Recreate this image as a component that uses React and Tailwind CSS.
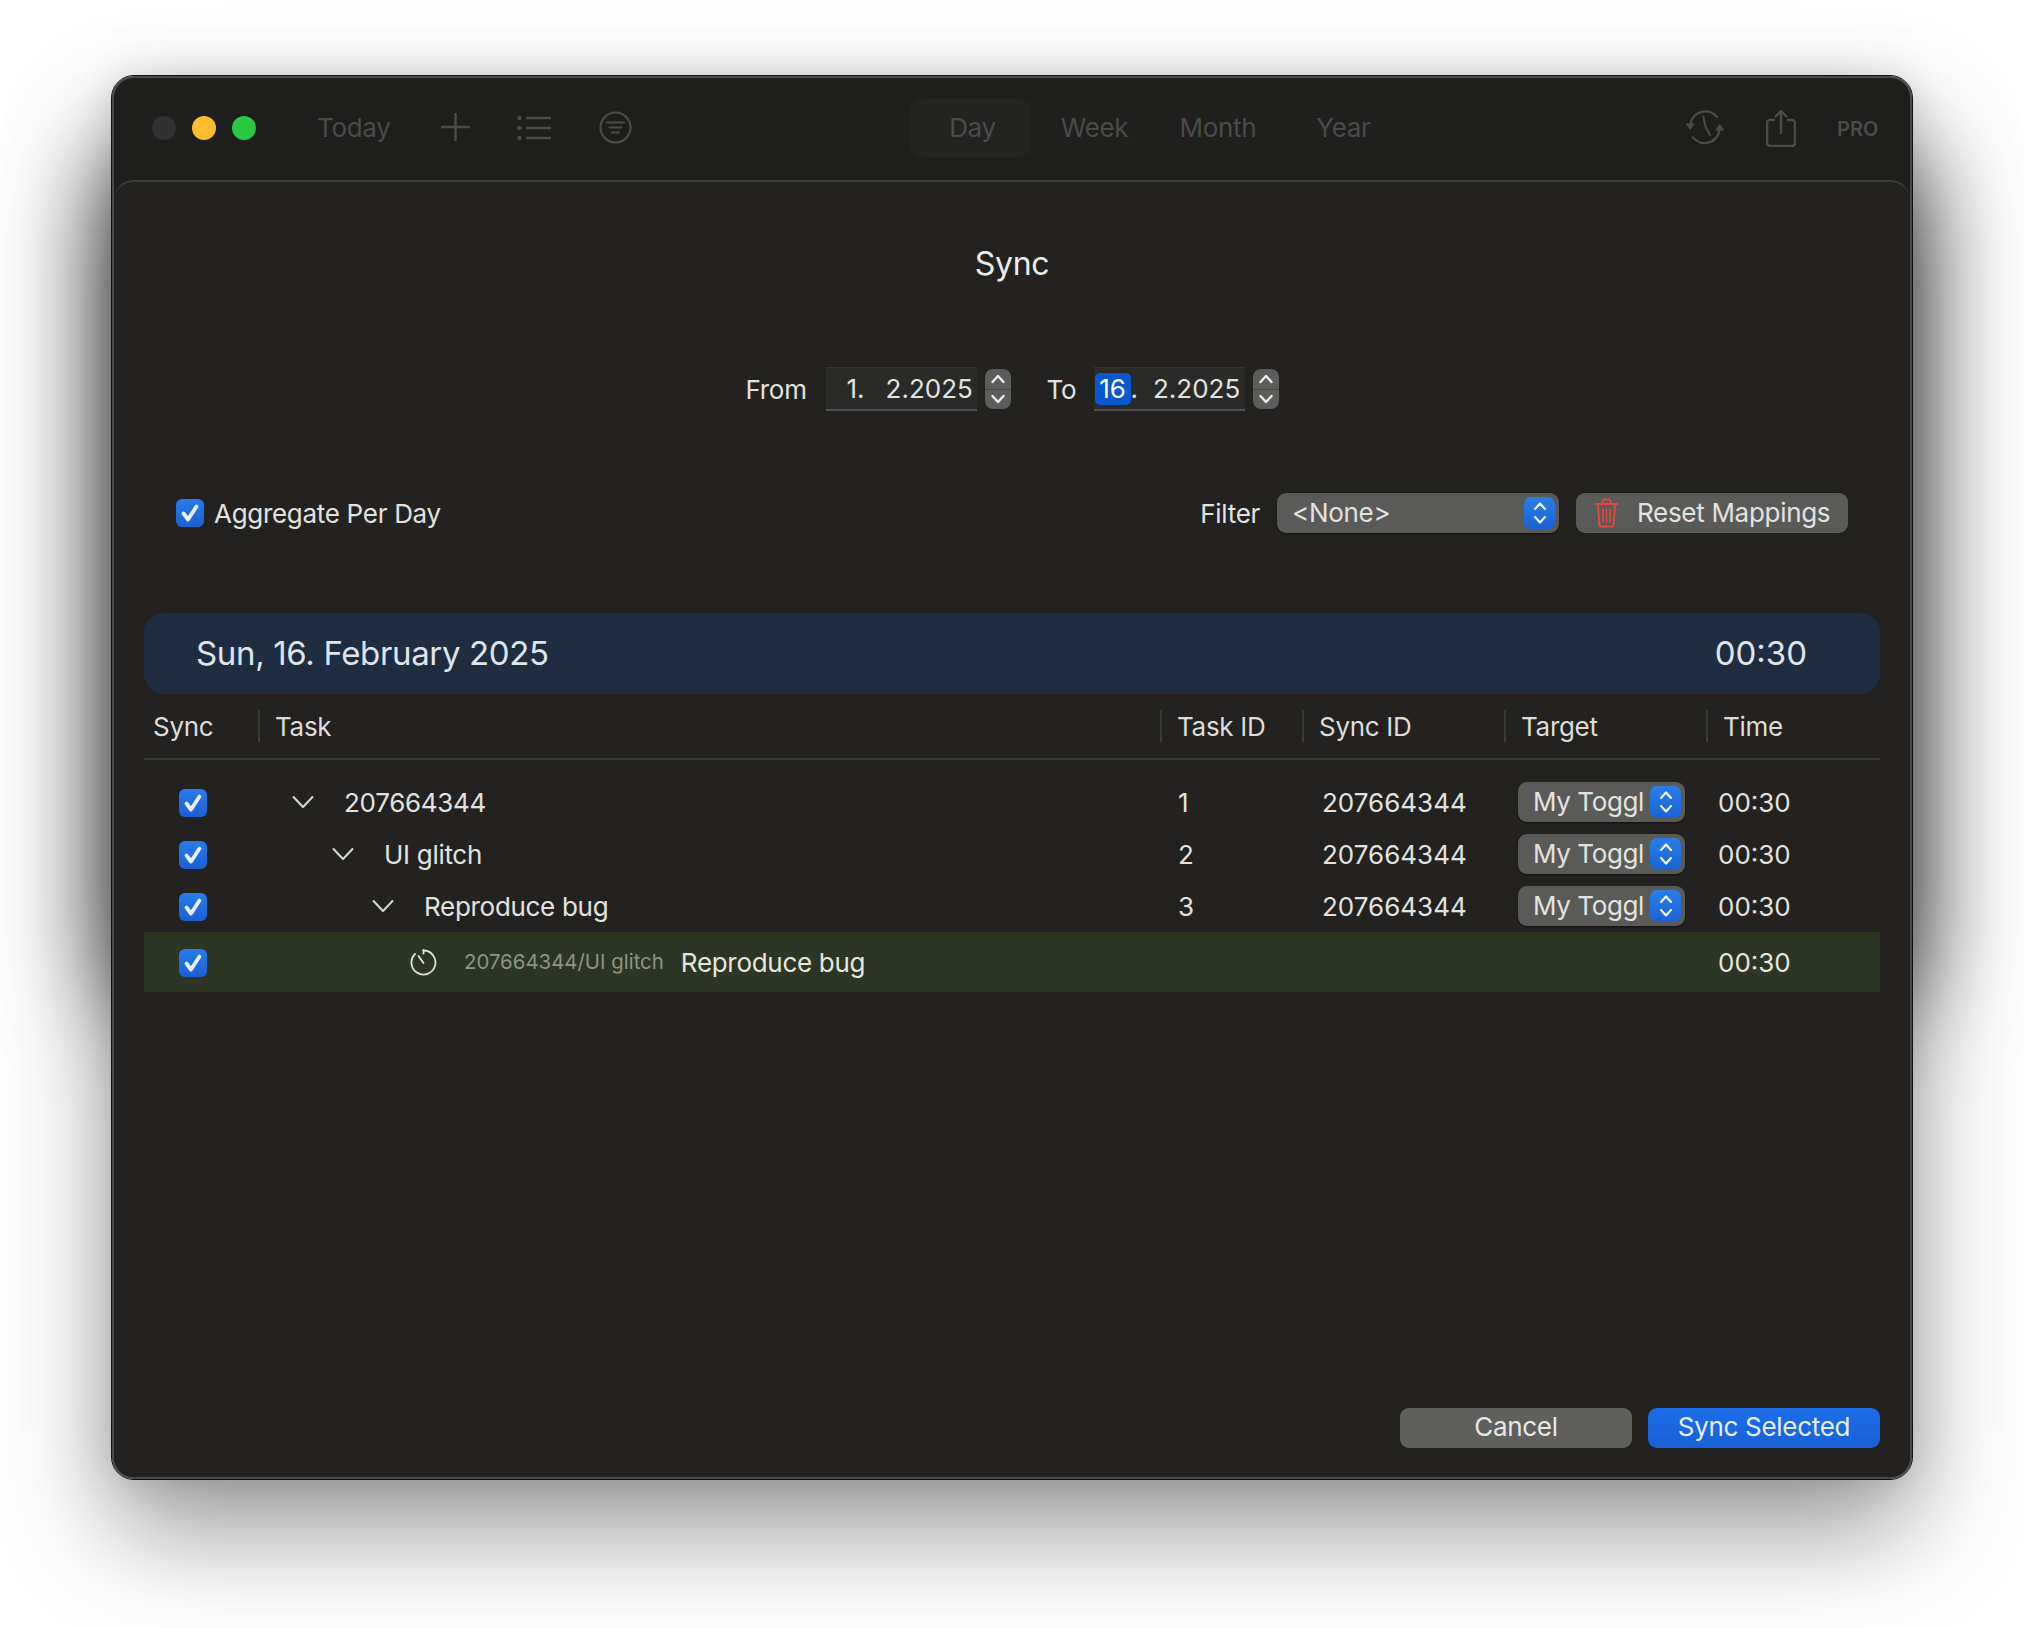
const sans = "font-['Inter','Liberation_Sans',sans-serif]";
const cols = "grid grid-cols-[114px_902px_142px_202px_202px_174px]";

function Checkbox() {
  return (
    <div className="w-[28px] h-[28px] rounded-[6px] bg-gradient-to-b from-[#2a7cec] to-[#1b5fd2] flex items-center justify-center shrink-0">
      <svg width="22" height="22" viewBox="0 0 22 22" fill="none">
        <path d="M4.500 11.500 9 17.500 17.500 4.500" stroke="#e8f0ff" strokeWidth="3.800" strokeLinecap="round" strokeLinejoin="round" />
      </svg>
    </div>
  );
}

function UpDown() {
  return (
    <svg width="14" height="30" viewBox="0 0 14 30" fill="none">
      <path d="M2 11 7 5.500 12 11M2 19 7 24.500 12 19" stroke="#f2f6ff" strokeWidth="2.200" strokeLinecap="round" strokeLinejoin="round" />
    </svg>
  );
}

function Chevron() {
  return (
    <svg width="22" height="14" viewBox="0 0 22 14" fill="none">
      <path d="M1.500 2 11 12 20.500 2" stroke="#d8d8d6" strokeWidth="2" strokeLinecap="round" strokeLinejoin="round" />
    </svg>
  );
}

function Stepper() {
  return (
    <div className="w-[26px] h-[40px] rounded-[8px] bg-[#5c5c5b] flex flex-col items-center justify-between py-[3px] relative">
      <svg width="16" height="14" viewBox="0 0 16 14" fill="none">
        <path d="M2.500 10 8 4l5.500 6" stroke="#ececec" strokeWidth="2.400" strokeLinecap="round" strokeLinejoin="round" />
      </svg>
      <div className="absolute left-0 right-0 top-[20px] h-px bg-[#474747]" />
      <svg width="16" height="14" viewBox="0 0 16 14" fill="none">
        <path d="M2.500 4 8 10l5.500-6" stroke="#ececec" strokeWidth="2.400" strokeLinecap="round" strokeLinejoin="round" />
      </svg>
    </div>
  );
}

function Field({ children }) {
  return (
    <div className="w-[151px] h-[44px] bg-[#2a2a29] border-t border-t-[#353535] border-b-2 border-b-[#505050] flex items-center text-[26px] text-[#e2e2e0] leading-none tracking-normal">
      {children}
    </div>
  );
}

function Popup({ label }) {
  return (
    <div className="w-[167px] h-[40px] rounded-[9px] bg-[#5a5a59] shadow-[0_1px_2px_rgba(0,0,0,0.5)] flex items-center justify-between pl-[15px] pr-[4px] text-[26px] text-[#e2e2e0]">
      <span className="whitespace-nowrap tracking-[-0.4px] pb-[2px]">{label}</span>
      <div className="w-[31px] h-[32px] rounded-[7px] bg-gradient-to-b from-[#2a7fe8] to-[#1a62d6] flex items-center justify-center">
        <UpDown />
      </div>
    </div>
  );
}

function HeadCell({ label, first }) {
  if (first) {
    return <div className="pl-[9px] text-[#dcdcda]">{label}</div>;
  }
  return (
    <div className="h-[32px] border-l-2 border-l-[#3a3a39] pl-[15px] flex items-center text-[#dcdcda]">{label}</div>
  );
}

function TreeRow({ depth, name, id }) {
  return (
    <div className={`${cols} h-[52px] items-center text-[26px] text-[#e2e2e0]`}>
      <div className="pl-[35px] pt-[2px]"><Checkbox /></div>
      <div className="flex items-center" style={{ paddingLeft: 34 + depth * 40 }}>
        <div className="w-[52px]"><Chevron /></div>
        <span>{name}</span>
      </div>
      <div className="pl-[18px] tracking-normal">{id}</div>
      <div className="pl-[20px] tracking-normal">207664344</div>
      <div className="pl-[14px]"><Popup label="My Toggl" /></div>
      <div className="pl-[12px] tracking-normal">00:30</div>
    </div>
  );
}

export default function App() {
  const rows = [
    { name: "207664344", id: 1 },
    { name: "UI glitch", id: 2 },
    { name: "Reproduce bug", id: 3 },
  ];
  return (
    <div className={`w-[2024px] h-[1628px] bg-white pt-[76px] pl-[112px] overflow-hidden ${sans}`}>
      <div className="relative w-[1800px] h-[1403px]">
        {/* heavier shadow behind the upper part of the window */}
        <div className="absolute left-0 right-0 top-[100px] h-[820px] bg-[#222] shadow-[0_0_100px_rgba(0,0,0,0.75)]" />

        <div className="relative w-[1800px] h-[1403px] rounded-[22px] bg-[#1e1e1d] border-2 border-[#4a4a4a] outline outline-1 outline-[#111] flex flex-col shadow-[0_50px_110px_rgba(0,0,0,0.42),0_0_40px_rgba(0,0,0,0.12)]">
          {/* toolbar, dimmed behind the sheet */}
          <div className="h-[102px] shrink-0 flex items-center text-[#4b4b4a] text-[26px] tracking-[-0.3px]">
            <div className="flex items-center gap-[16px] pl-[38px] -mt-[3px]">
              <div className="w-[24px] h-[24px] rounded-full bg-[#323232]" />
              <div className="w-[24px] h-[24px] rounded-full bg-[#febc2e]" />
              <div className="w-[24px] h-[24px] rounded-full bg-[#28c840]" />
            </div>
            <span className="ml-[61px] w-[72px] -mt-[3px]">Today</span>
            <svg className="ml-[52px] -mt-[5px]" width="29" height="28" viewBox="0 0 29 28" fill="none">
              <path d="M14.500 1v26M1 14h27" stroke="#4b4b4a" strokeWidth="2.400" strokeLinecap="round" />
            </svg>
            <svg className="ml-[47px] -mt-[3px]" width="35" height="26" viewBox="0 0 35 26" fill="none">
              <circle cx="2.500" cy="3" r="2.200" fill="#4b4b4a" />
              <circle cx="2.500" cy="13" r="2.200" fill="#4b4b4a" />
              <circle cx="2.500" cy="23" r="2.200" fill="#4b4b4a" />
              <path d="M9 3h25M9 13h25M9 23h25" stroke="#4b4b4a" strokeWidth="2.600" />
            </svg>
            <svg className="ml-[47px] -mt-[3px]" width="33" height="33" viewBox="0 0 33 33" fill="none">
              <circle cx="16.500" cy="16.500" r="15" stroke="#4b4b4a" strokeWidth="2.200" />
              <path d="M8 11.500h17M10.500 16.500h12M13 21.500h7" stroke="#4b4b4a" strokeWidth="2.200" strokeLinecap="round" />
            </svg>

            <div className="ml-[278px] -mt-[3px] w-[492px] h-[58px] rounded-[12px] bg-[#1f1f1e] flex items-center">
              <div className="w-[120px] h-[58px] rounded-[12px] bg-[#232322] flex items-center justify-center pl-[5px]">Day</div>
              <div className="w-[122px] text-center pl-[7px]">Week</div>
              <div className="w-[126px] text-center pl-[6px]">Month</div>
              <div className="w-[124px] text-center pl-[7px]">Year</div>
            </div>

            <svg className="ml-[283px] -mt-[4px]" width="40" height="34" viewBox="0 0 40 34" fill="none">
              <path d="M5.500 14a15 15 0 0 1 26.500-7M34.500 20a15 15 0 0 1-26.500 7.500" stroke="#4b4b4a" strokeWidth="2.400" strokeLinecap="round" />
              <path d="M0.500 13.500h9.500l-4.750 6.500zM30 20.500h9.500l-4.750-6.500z" fill="#4b4b4a" />
              <path d="M18.300 6.700 20.700 17.300 25 25" stroke="#4b4b4a" strokeWidth="2" strokeLinecap="round" strokeLinejoin="round" />
            </svg>
            <svg className="ml-[41px] -mt-[3px]" width="30" height="38" viewBox="0 0 30 38" fill="none">
              <path d="M9 11H4a3 3 0 0 0-3 3v20a3 3 0 0 0 3 3h22a3 3 0 0 0 3-3V14a3 3 0 0 0-3-3h-5" stroke="#4b4b4a" strokeWidth="2.600" />
              <path d="M15 25V3M9 8l6-6L21 8" stroke="#4b4b4a" strokeWidth="2.400" strokeLinejoin="round" />
            </svg>
            <span className="ml-[41px] text-[20px] font-semibold tracking-normal -mt-[1px]">PRO</span>
          </div>

          {/* sheet */}
          <div className="flex-1 rounded-[20px] bg-[#232220] border-t-2 border-t-[#3e3d3c] flex flex-col px-[30px] pb-[29px] text-[26px] text-[#e2e2e0] tracking-[-0.3px]">
            <div className="pt-[62px] h-[101px] text-center text-[32px] leading-[40px] text-[#ececea]">Sync</div>

            <div className="mt-[84px] h-[44px] flex items-center justify-center">
              <span className="w-[62px]">From</span>
              <div className="ml-[18px]">
                <Field>
                  <span className="ml-[21px]">1.</span>
                  <span className="ml-[21px]">2.2025</span>
                </Field>
              </div>
              <div className="ml-[8px]"><Stepper /></div>
              <span className="ml-[36px] w-[28px]">To</span>
              <div className="ml-[19px]">
                <Field>
                  <span className="ml-px w-[36px] h-[32px] rounded-[5px] bg-[#0b57d0] text-white flex items-center justify-center">16</span>
                  <span>.</span>
                  <span className="ml-[15px]">2.2025</span>
                </Field>
              </div>
              <div className="ml-[8px]"><Stepper /></div>
            </div>

            <div className="mt-[82px] h-[40px] flex items-center pl-[32px] pr-[32px]">
              <Checkbox />
              <span className="ml-[10px]">Aggregate Per Day</span>
              <span className="ml-auto">Filter</span>
              <div className="ml-[17px] w-[282px] h-[40px] rounded-[9px] bg-[#5a5a59] shadow-[0_1px_2px_rgba(0,0,0,0.5)] flex items-center justify-between pl-[15px] pr-[4px]">
                <span className="pb-[2px]">&lt;None&gt;</span>
                <div className="w-[31px] h-[32px] rounded-[7px] bg-gradient-to-b from-[#2a7fe8] to-[#1a62d6] flex items-center justify-center">
                  <UpDown />
                </div>
              </div>
              <div className="ml-[17px] w-[272px] h-[40px] rounded-[9px] bg-[#5a5a59] flex items-center pl-[18px]">
                <svg width="25" height="30" viewBox="0 0 25 30" fill="none">
                  <path d="M1.500 6h22M8.500 5.500V3.200A1.700 1.700 0 0 1 10.200 1.500h4.600a1.700 1.700 0 0 1 1.700 1.700v2.300" stroke="#e0483f" strokeWidth="2" strokeLinecap="round" />
                  <path d="M4 6.500 5.300 26a2.500 2.500 0 0 0 2.500 2.500h9.400a2.500 2.500 0 0 0 2.500-2.500L21 6.500" stroke="#e0483f" strokeWidth="2" />
                  <path d="M9 11v13M12.500 11v13M16 11v13" stroke="#e0483f" strokeWidth="1.600" strokeLinecap="round" />
                </svg>
                <span className="ml-[18px] pb-[2px]">Reset Mappings</span>
              </div>
            </div>

            <div className="mt-[80px] h-[81px] rounded-[20px] bg-[#1f2d42] flex items-center justify-between pl-[52px] pr-[73px] text-[33px] text-[#dfe5ec]">
              <span className="tracking-[-0.35px]">Sun, 16. February 2025</span>
              <span className="tracking-normal">00:30</span>
            </div>

            <div className={`${cols} h-[66px] items-center border-b-2 border-b-[#3a3a39]`}>
              <HeadCell label="Sync" first />
              <HeadCell label="Task" />
              <HeadCell label="Task ID" />
              <HeadCell label="Sync ID" />
              <HeadCell label="Target" />
              <HeadCell label="Time" />
            </div>

            <div className="pt-[16px]">
              {rows.map((r, i) => (
                <TreeRow key={r.id} depth={i} name={r.name} id={r.id} />
              ))}
              <div className={`${cols} h-[60px] items-center bg-[#2d3524] text-[#e4e8de]`}>
                <div className="pl-[35px] pt-[2px]"><Checkbox /></div>
                <div className="flex items-center pl-[152px]">
                  <svg width="27" height="28" viewBox="0 0 27 28" fill="none">
                    <path d="M13.500 2.500a12 12 0 1 1-8.500 3.500" stroke="#dfe4d8" strokeWidth="1.800" strokeLinecap="round" />
                    <path d="M13.500 2v3.500M13.500 15 8.500 8" stroke="#dfe4d8" strokeWidth="1.800" strokeLinecap="round" />
                  </svg>
                  <span className="ml-[27px] text-[20.4px] text-[#8e9388] tracking-normal">207664344/UI glitch</span>
                  <span className="ml-[17px]">Reproduce bug</span>
                </div>
                <div />
                <div />
                <div />
                <div className="pl-[12px] tracking-normal">00:30</div>
              </div>
            </div>

            <div className="mt-auto flex justify-end gap-[16px]">
              <div className="w-[232px] h-[40px] rounded-[9px] bg-[#5f5f5e] flex items-center justify-center pb-[3px] text-[#e8e8e6]">Cancel</div>
              <div className="w-[232px] h-[40px] rounded-[9px] bg-gradient-to-b from-[#1c6eea] to-[#1860d6] flex items-center justify-center pb-[3px] text-[#e6efff]">Sync Selected</div>
            </div>
          </div>
        </div>
      </div>
    </div>
  );
}
